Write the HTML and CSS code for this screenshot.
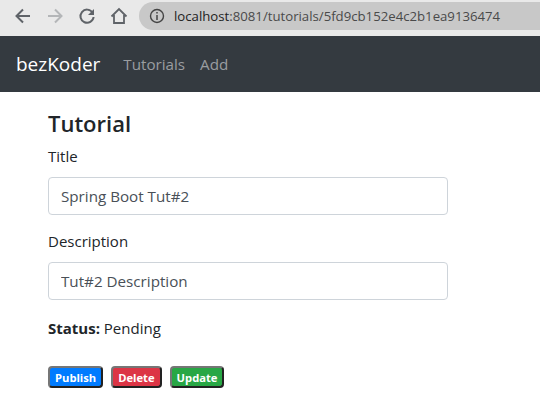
FILE: index.html
```html
<!DOCTYPE html>
<html lang="en">
<head>
    <meta charset="UTF-8">
    <title>Tutorial</title>
    <link rel="stylesheet" href="styles.css">
</head>
<body>
    <div class="toolbar">
        <svg class="tool" viewBox="0 0 18 18"><path d="M16 9H3M9 2.5 2.5 9 9 15.5" fill="none" stroke="#5f6368" stroke-width="2"/></svg>
        <svg class="tool" viewBox="0 0 18 18"><path d="M2 9h13M9 2.5 15.5 9 9 15.5" fill="none" stroke="#b4b6b8" stroke-width="2"/></svg>
        <svg class="tool" viewBox="0 0 18 18"><path d="M14.5 5.5A6.6 6.6 0 1 0 15.6 10" fill="none" stroke="#5f6368" stroke-width="2"/><path d="M16 2v6h-6z" fill="#5f6368"/></svg>
        <svg class="tool" viewBox="0 0 18 18"><path d="M1.5 9.5 9 2l7.5 7.5M4 8v8h10V8" fill="none" stroke="#5f6368" stroke-width="1.8"/></svg>
        <div class="url-bar">
            <svg class="info" viewBox="0 0 16 16"><circle cx="8" cy="8" r="6.5" fill="none" stroke="#444" stroke-width="1.4"/><path d="M8 7v5M8 4v1.6" stroke="#444" stroke-width="1.5"/></svg>
            <span class="url">localhost<span class="url-rest">:8081/tutorials/5fd9cb152e4c2b1ea9136474</span></span>
        </div>
    </div>
    <nav class="navbar">
        <a class="brand">bezKoder</a>
        <a class="nav-link">Tutorials</a>
        <a class="nav-link">Add</a>
    </nav>
    <main class="edit-form">
        <h4>Tutorial</h4>
        <div class="form-group">
            <label for="title">Title</label>
            <input id="title" class="form-control" type="text" value="Spring Boot Tut#2">
        </div>
        <div class="form-group">
            <label for="description">Description</label>
            <input id="description" class="form-control" type="text" value="Tut#2 Description">
        </div>
        <div class="status"><strong>Status:</strong> Pending</div>
        <div class="actions">
            <button class="badge blue">Publish</button>
            <button class="badge red">Delete</button>
            <button class="badge green">Update</button>
        </div>
    </main>
</body>
</html>
```
FILE: styles.css
```css
body {
    font-family: "Open Sans", "Noto Sans", sans-serif;
    font-size: 15px;
    color: #212529;
    background-color: #fff;
    margin: 0;
}
.toolbar {
    display: flex;
    align-items: center;
    height: 36px;
    padding: 0 0 5px 14px;
    box-sizing: border-box;
    background-color: #e9e9e9;
}
.tool {
    width: 18px;
    height: 18px;
    margin-right: 14px;
    flex: none;
}
.url-bar {
    flex: 1;
    display: flex;
    align-items: center;
    height: 28px;
    margin-left: -3px;
    padding-left: 10px;
    border-radius: 14px 0 0 14px;
    background-color: #c8c8c8;
}
.info {
    width: 16px;
    height: 16px;
    margin-right: 9px;
}
.url {
    font-size: 13.2px;
    color: #222;
    white-space: nowrap;
}
.url-rest {
    color: #4a4a4a;
}
.navbar {
    display: flex;
    align-items: center;
    height: 56px;
    padding-left: 16px;
    background-color: #343a40;
}
.brand {
    font-size: 19px;
    color: #fff;
    margin-right: 23px;
}
.nav-link {
    font-size: 15.2px;
    color: #9a9da0;
    margin-right: 15px;
}
.edit-form {
    width: 400px;
    margin-left: 48px;
}
h4 {
    font-size: 22px;
    font-weight: 600;
    line-height: 26px;
    margin: 18px 0 9px 0;
}
label {
    display: block;
    line-height: 22px;
    margin-bottom: 10px;
}
.form-group {
    margin-bottom: 15px;
}
.form-control {
    display: block;
    width: 100%;
    height: 38px;
    box-sizing: border-box;
    padding: 6px 12px;
    font-family: inherit;
    font-size: 15.2px;
    color: #495057;
    border: 1px solid #ced4da;
    border-radius: 4px;
}
.status {
    line-height: 22px;
    margin-top: 17px;
}
.status strong {
    font-weight: 700;
}
.actions {
    display: flex;
    gap: 8px;
    margin-top: 27px;
}
.badge {
    height: 22px;
    padding: 0 5px;
    font-family: "Open Sans", sans-serif;
    font-size: 11.2px;
    font-weight: 700;
    color: #fff;
    border-width: 2px;
    border-style: solid;
    border-color: #767676 #222 #222 #767676;
    border-radius: 4px;
}
.blue {
    background-color: #007bff;
}
.red {
    background-color: #dc3545;
}
.green {
    background-color: #28a745;
}
```
